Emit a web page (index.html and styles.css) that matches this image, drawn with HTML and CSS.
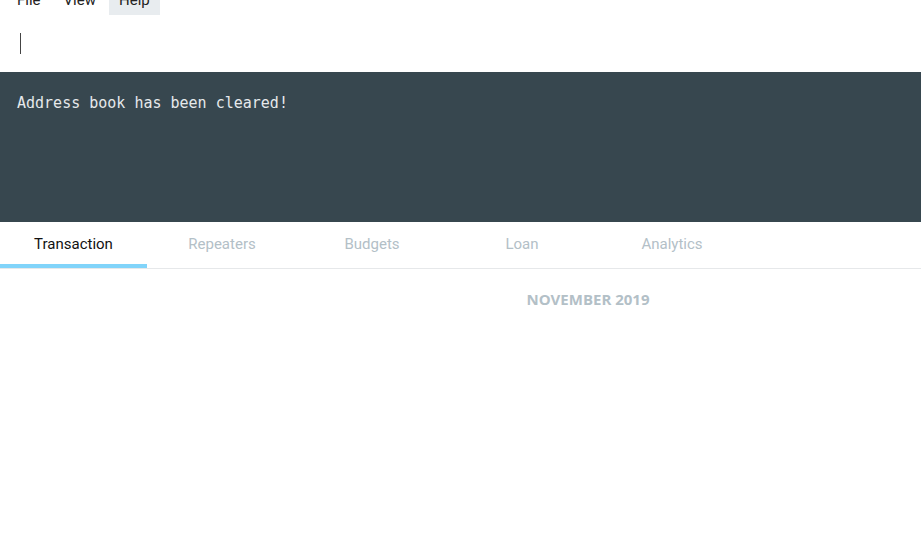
FILE: index.html
```
<!DOCTYPE html>
<html>
<head>
<meta charset="utf-8">
<link rel="stylesheet" href="styles.css">
</head>
<body>
<div class="menubar">
  <div class="menu-item">File</div>
  <div class="menu-item">View</div>
  <div class="menu-item active">Help</div>
</div>
<div class="command-box">
  <span class="caret"></span>
</div>
<div class="result-display">Address book has been cleared!</div>
<div class="tabs">
  <div class="tab selected">Transaction</div>
  <div class="tab">Repeaters</div>
  <div class="tab">Budgets</div>
  <div class="tab">Loan</div>
  <div class="tab">Analytics</div>
</div>
<div class="content">
  <div class="side"></div>
  <div class="main">
    <div class="month">NOVEMBER 2019</div>
  </div>
</div>
</body>
</html>
```
FILE: styles.css
```
html, body {
  margin: 0;
  padding: 0;
  background: #ffffff;
  font-family: Roboto, "Liberation Sans", sans-serif;
  overflow: hidden;
}
.menubar {
  display: flex;
  gap: 3px;
  margin-top: -14px;
  padding-left: 7px;
  height: 29px;
}
.menu-item {
  padding: 6px 10px;
  font-size: 15px;
  line-height: 17px;
  color: #222;
}
.menu-item.active {
  background: #e8ecef;
}
.command-box {
  height: 57px;
  padding: 18px 0 0 20px;
  box-sizing: border-box;
}
.caret {
  display: block;
  width: 1px;
  height: 21px;
  background: #444;
}
.result-display {
  height: 150px;
  box-sizing: border-box;
  background: #37474f;
  color: #e6e9eb;
  font-family: "DejaVu Sans Mono", "Liberation Mono", monospace;
  font-size: 15px;
  line-height: 20px;
  padding: 21px 17px 0;
}
.tabs {
  display: flex;
  height: 47px;
  border-bottom: 1px solid #e6e8ea;
  box-sizing: border-box;
}
.tab {
  width: 150px;
  text-align: center;
  font-size: 15px;
  line-height: 44px;
  color: #b3c0c7;
  box-sizing: border-box;
}
.tab:first-child {
  width: 147px;
}
.tab.selected {
  color: #111;
  border-bottom: 4px solid #81d4fa;
}
.content {
  display: grid;
  grid-template-columns: 255px 1fr;
}
.main {
  padding-top: 20px;
  text-align: center;
}
.month {
  font-family: "Open Sans", sans-serif;
  font-weight: 700;
  font-size: 15px;
  line-height: 20px;
  color: #b3c0c7;
}
```
